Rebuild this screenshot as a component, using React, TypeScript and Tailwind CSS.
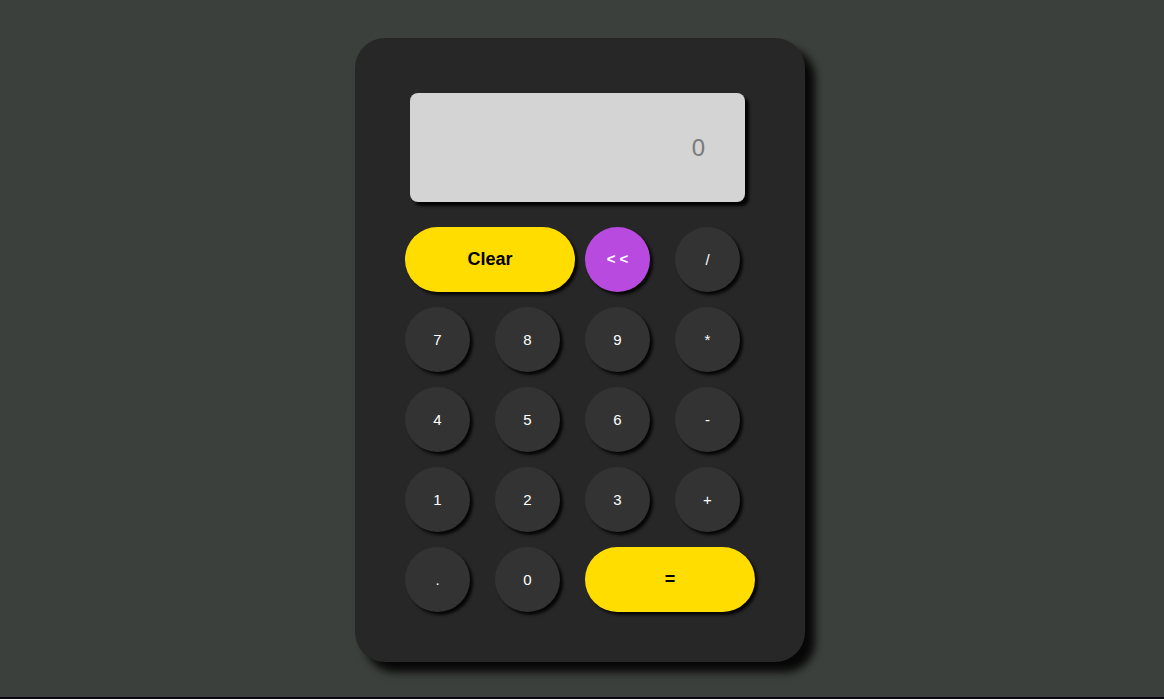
import React from 'react';

const font = { fontFamily: '"Liberation Sans", Arial, sans-serif' };

const rows: string[][] = [
  ['7', '8', '9', '*'],
  ['4', '5', '6', '-'],
  ['1', '2', '3', '+'],
];

function Key({ label, className = '' }: { label: string; className?: string }) {
  return (
    <button
      className={`w-[65px] h-[65px] rounded-full bg-[#333333] text-white text-[15px] font-medium shadow-[3px_3px_3px_rgba(0,0,0,0.85)] flex items-center justify-center pt-[1px] ${className}`}
    >
      {label}
    </button>
  );
}

export default function App() {
  return (
    <div style={font} className="min-h-[699px] bg-[#3c403c] flex flex-col">
      <div className="h-[697px] flex justify-center pt-[38px] pr-[4px]">
        <div className="w-[450px] h-[624px] rounded-[30px] bg-[#272727] shadow-[10px_10px_8px_rgba(0,0,0,0.9)] pt-[55px] px-[50px]">
          {/* display */}
          <div className="ml-[5px] w-[335px] h-[109px] rounded-[8px] bg-[#d4d4d4] shadow-[4px_4px_3px_rgba(0,0,0,0.9)] flex items-center justify-end pr-[40px]">
            <span className="text-[24px] text-[#7a7a7a]">0</span>
          </div>

          <div className="mt-[25px] flex flex-col gap-[15px]">
            <div className="flex">
              <button className="w-[170px] h-[65px] rounded-full bg-[#ffdd00] text-black text-[18px] font-bold shadow-[3px_3px_3px_rgba(0,0,0,0.85)]">
                Clear
              </button>
              <button className="ml-[10px] w-[65px] h-[65px] rounded-full bg-[#b94ae0] text-white text-[15px] font-bold shadow-[3px_3px_3px_rgba(0,0,0,0.85)]">
                &lt; &lt;
              </button>
              <Key label="/" className="ml-[25px]" />
            </div>
            {rows.map((r) => (
              <div key={r.join('')} className="flex gap-[25px]">
                {r.map((k) => (
                  <Key key={k} label={k} />
                ))}
              </div>
            ))}
            <div className="flex gap-[25px]">
              <Key label="." />
              <Key label="0" />
              <button className="w-[170px] h-[65px] rounded-full bg-[#ffdd00] text-black text-[18px] font-bold shadow-[3px_3px_3px_rgba(0,0,0,0.85)]">
                =
              </button>
            </div>
          </div>
        </div>
      </div>
      <div className="h-[2px] bg-[#0a0510]" />
    </div>
  );
}
